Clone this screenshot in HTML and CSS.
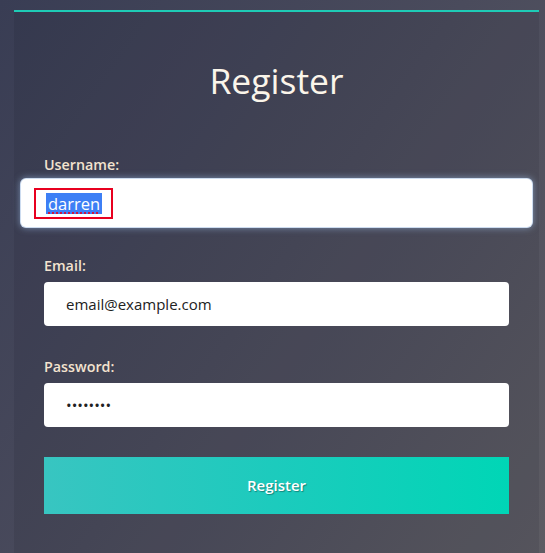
FILE: index.html
```html
<!DOCTYPE html>
<html>
<head>
<meta charset="utf-8">
<link rel="stylesheet" href="styles.css">
</head>
<body>
<div class="page">
  <div class="card">
    <h1 class="title">Register</h1>
    <form class="form">
      <div class="group">
        <label class="label">Username:</label>
        <div class="field focused"><span class="mark"><span class="sel">darren</span></span></div>
      </div>
      <div class="group">
        <label class="label">Email:</label>
        <input class="field" type="text" value="email@example.com">
      </div>
      <div class="group">
        <label class="label">Password:</label>
        <input class="field" type="password" value="12345678">
      </div>
      <button class="btn" type="button">Register</button>
    </form>
  </div>
</div>
</body>
</html>
```
FILE: styles.css
```css
html, body {
  margin: 0;
  height: 553px;
  overflow: hidden;
}
body {
  font-family: "Open Sans", "DejaVu Sans", sans-serif;
  background: linear-gradient(125deg, #393d54 0%, #4a4b5c 50%, #5d5c63 100%);
}
.page {
  padding: 10px 6px 0 14px;
  height: 100%;
  box-sizing: border-box;
}
.card {
  height: 100%;
  box-sizing: border-box;
  border-top: 2px solid #1ecbb6;
  background: rgba(10, 12, 25, 0.09);
  padding: 45px 30px 0;
}
.title {
  margin: 0 0 52px;
  text-align: center;
  font-weight: 400;
  font-size: 35.5px;
  line-height: 46px;
  color: #fbf5ea;
}
.form {
  display: flex;
  flex-direction: column;
}
.group {
  display: flex;
  flex-direction: column;
  margin-bottom: 31px;
}
.label {
  font-size: 14.3px;
  line-height: 20px;
  font-weight: 600;
  color: #f3e3cf;
  margin-bottom: 6px;
}
.field {
  box-sizing: border-box;
  height: 44px;
  border: none;
  border-radius: 4px;
  background: #fff;
  padding: 0 22px;
  font-family: "Open Sans", "DejaVu Sans", sans-serif;
  font-size: 15px;
  color: #222;
  outline: none;
}
.field.focused {
  height: 48px;
  margin: -2px -23px;
  padding: 0 0 0 13px;
  display: flex;
  align-items: center;
  border-radius: 5px;
  box-shadow: 0 0 0 1px #cddcf0, 0 0 7px 1px rgba(170, 205, 250, 0.55);
  font-size: 16.5px;
}
.mark {
  display: inline-flex;
  align-items: center;
  border: 2px solid #e8001f;
  padding: 3px 9px 3px 10px;
}
.sel {
  background: #3d7ff5;
  color: #fff;
  line-height: 21px;
  padding: 0 2px;
  text-decoration: underline dotted #e8001f;
  text-underline-offset: 3px;
}
.btn {
  height: 57px;
  border: none;
  margin-top: -1px;
  padding-bottom: 3px;
  background: linear-gradient(90deg, #38c5c1 0%, #1ccbbd 50%, #00d6b6 100%);
  color: #fff;
  font-family: "Open Sans", "DejaVu Sans", sans-serif;
  font-size: 15px;
  font-weight: 600;
  text-shadow: 1px 1px 1px rgba(0, 0, 0, 0.35);
}
```
